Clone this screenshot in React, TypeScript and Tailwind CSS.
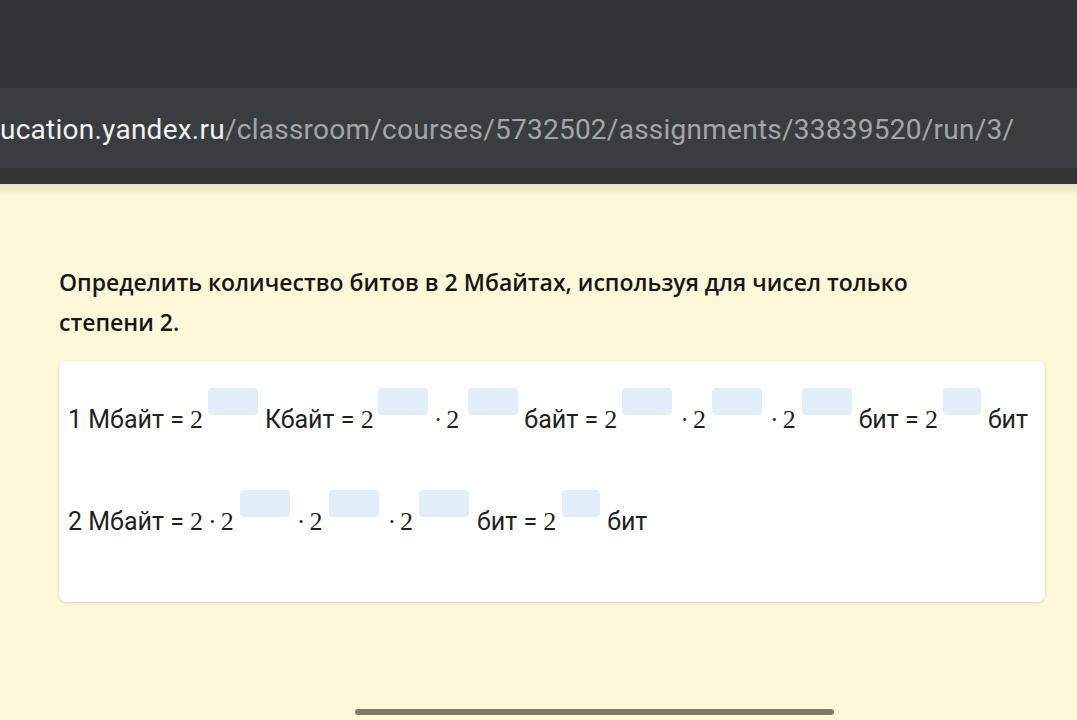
const box = "h-[27px] w-[50px] rounded-[4px] bg-[#e2effa] mb-[19px]";
const boxSm = "h-[27px] w-[38px] rounded-[4px] bg-[#e2effa] mb-[19px]";

function T({ children }: { children: React.ReactNode }) {
  return <span className="leading-[28px] whitespace-pre">{children}</span>;
}

function M({ children, className = "" }: { children: React.ReactNode; className?: string }) {
  return (
    <span className={`leading-[28px] whitespace-pre font-['Liberation_Serif',serif] text-[26px] ${className}`}>
      {children}
    </span>
  );
}

// "· 2" as KaTeX sets it: a dot, a medium space, then the 2
function Dot2() {
  return (
    <>
      <M>·</M>
      <M className="ml-[4px]">2</M>
    </>
  );
}

export default function App() {
  return (
    <main className="relative h-[720px] overflow-hidden bg-[#fdf8d8] font-['Roboto',sans-serif]">
      {/* Browser chrome */}
      <div className="h-[88px] bg-[#323538]" />
      <div className="h-[80px] bg-[#3a3d40] flex items-center">
        <p className="text-[28px] tracking-[0.25px] whitespace-nowrap pt-[4px]">
          <span className="text-[#f1f2f3]">ucation.yandex.ru</span>
          <span className="text-[#a3a6a9]">/classroom/courses/5732502/assignments/33839520/run/3/</span>
        </p>
      </div>
      <div className="h-[16px] bg-[#313432]" />
      <div className="h-[12px] bg-gradient-to-b from-[#e6e2c4] to-[#fdf8d8]" />

      {/* Task */}
      <section className="px-[59px] pt-[66px]">
        <h1 className="font-['Open_Sans',sans-serif] font-semibold text-[23px] leading-[40px] text-[#161616] max-w-[880px]">
          Определить количество битов в 2 Мбайтах, используя для чисел только степени 2.
        </h1>

        <div className="mt-[19px] w-[986px] h-[241px] bg-white rounded-[8px] shadow-[0_1px_3px_rgba(120,110,60,0.25)] pl-[9px] pt-[27px] text-[25px] text-[#1f1f1f]">
          <div className="flex items-end">
            <T>1 Мбайт = </T>
            <M>2</M>
            <div className={`${box} ml-[5px] mr-[7px]`} />
            <T>Кбайт = </T>
            <M>2</M>
            <div className={`${box} ml-[4px] mr-[6px]`} />
            <Dot2 />
            <div className={`${box} ml-[9px] mr-[6px]`} />
            <T>байт = </T>
            <M>2</M>
            <div className={`${box} ml-[5px] mr-[8px]`} />
            <Dot2 />
            <div className={`${box} ml-[6px] mr-[8px]`} />
            <Dot2 />
            <div className={`${box} ml-[6px] mr-[7px]`} />
            <T>бит = </T>
            <M>2</M>
            <div className={`${boxSm} ml-[5px] mr-[7px]`} />
            <T>бит</T>
          </div>

          <div className="flex items-end mt-[56px]">
            <T>2 Мбайт = </T>
            <M>2</M>
            <M className="ml-[5px]">·</M>
            <M className="ml-[4px]">2</M>
            <div className={`${box} ml-[6px] mr-[7px]`} />
            <Dot2 />
            <div className={`${box} ml-[7px] mr-[8px]`} />
            <Dot2 />
            <div className={`${box} ml-[6px] mr-[8px]`} />
            <T>бит = </T>
            <M>2</M>
            <div className={`${boxSm} ml-[6px] mr-[7px]`} />
            <T>бит</T>
          </div>
        </div>
      </section>

      {/* Scroll indicator */}
      <div className="absolute left-[355px] top-[709px] h-[6px] w-[479px] rounded-full bg-[#7d7a63]" />
    </main>
  );
}
